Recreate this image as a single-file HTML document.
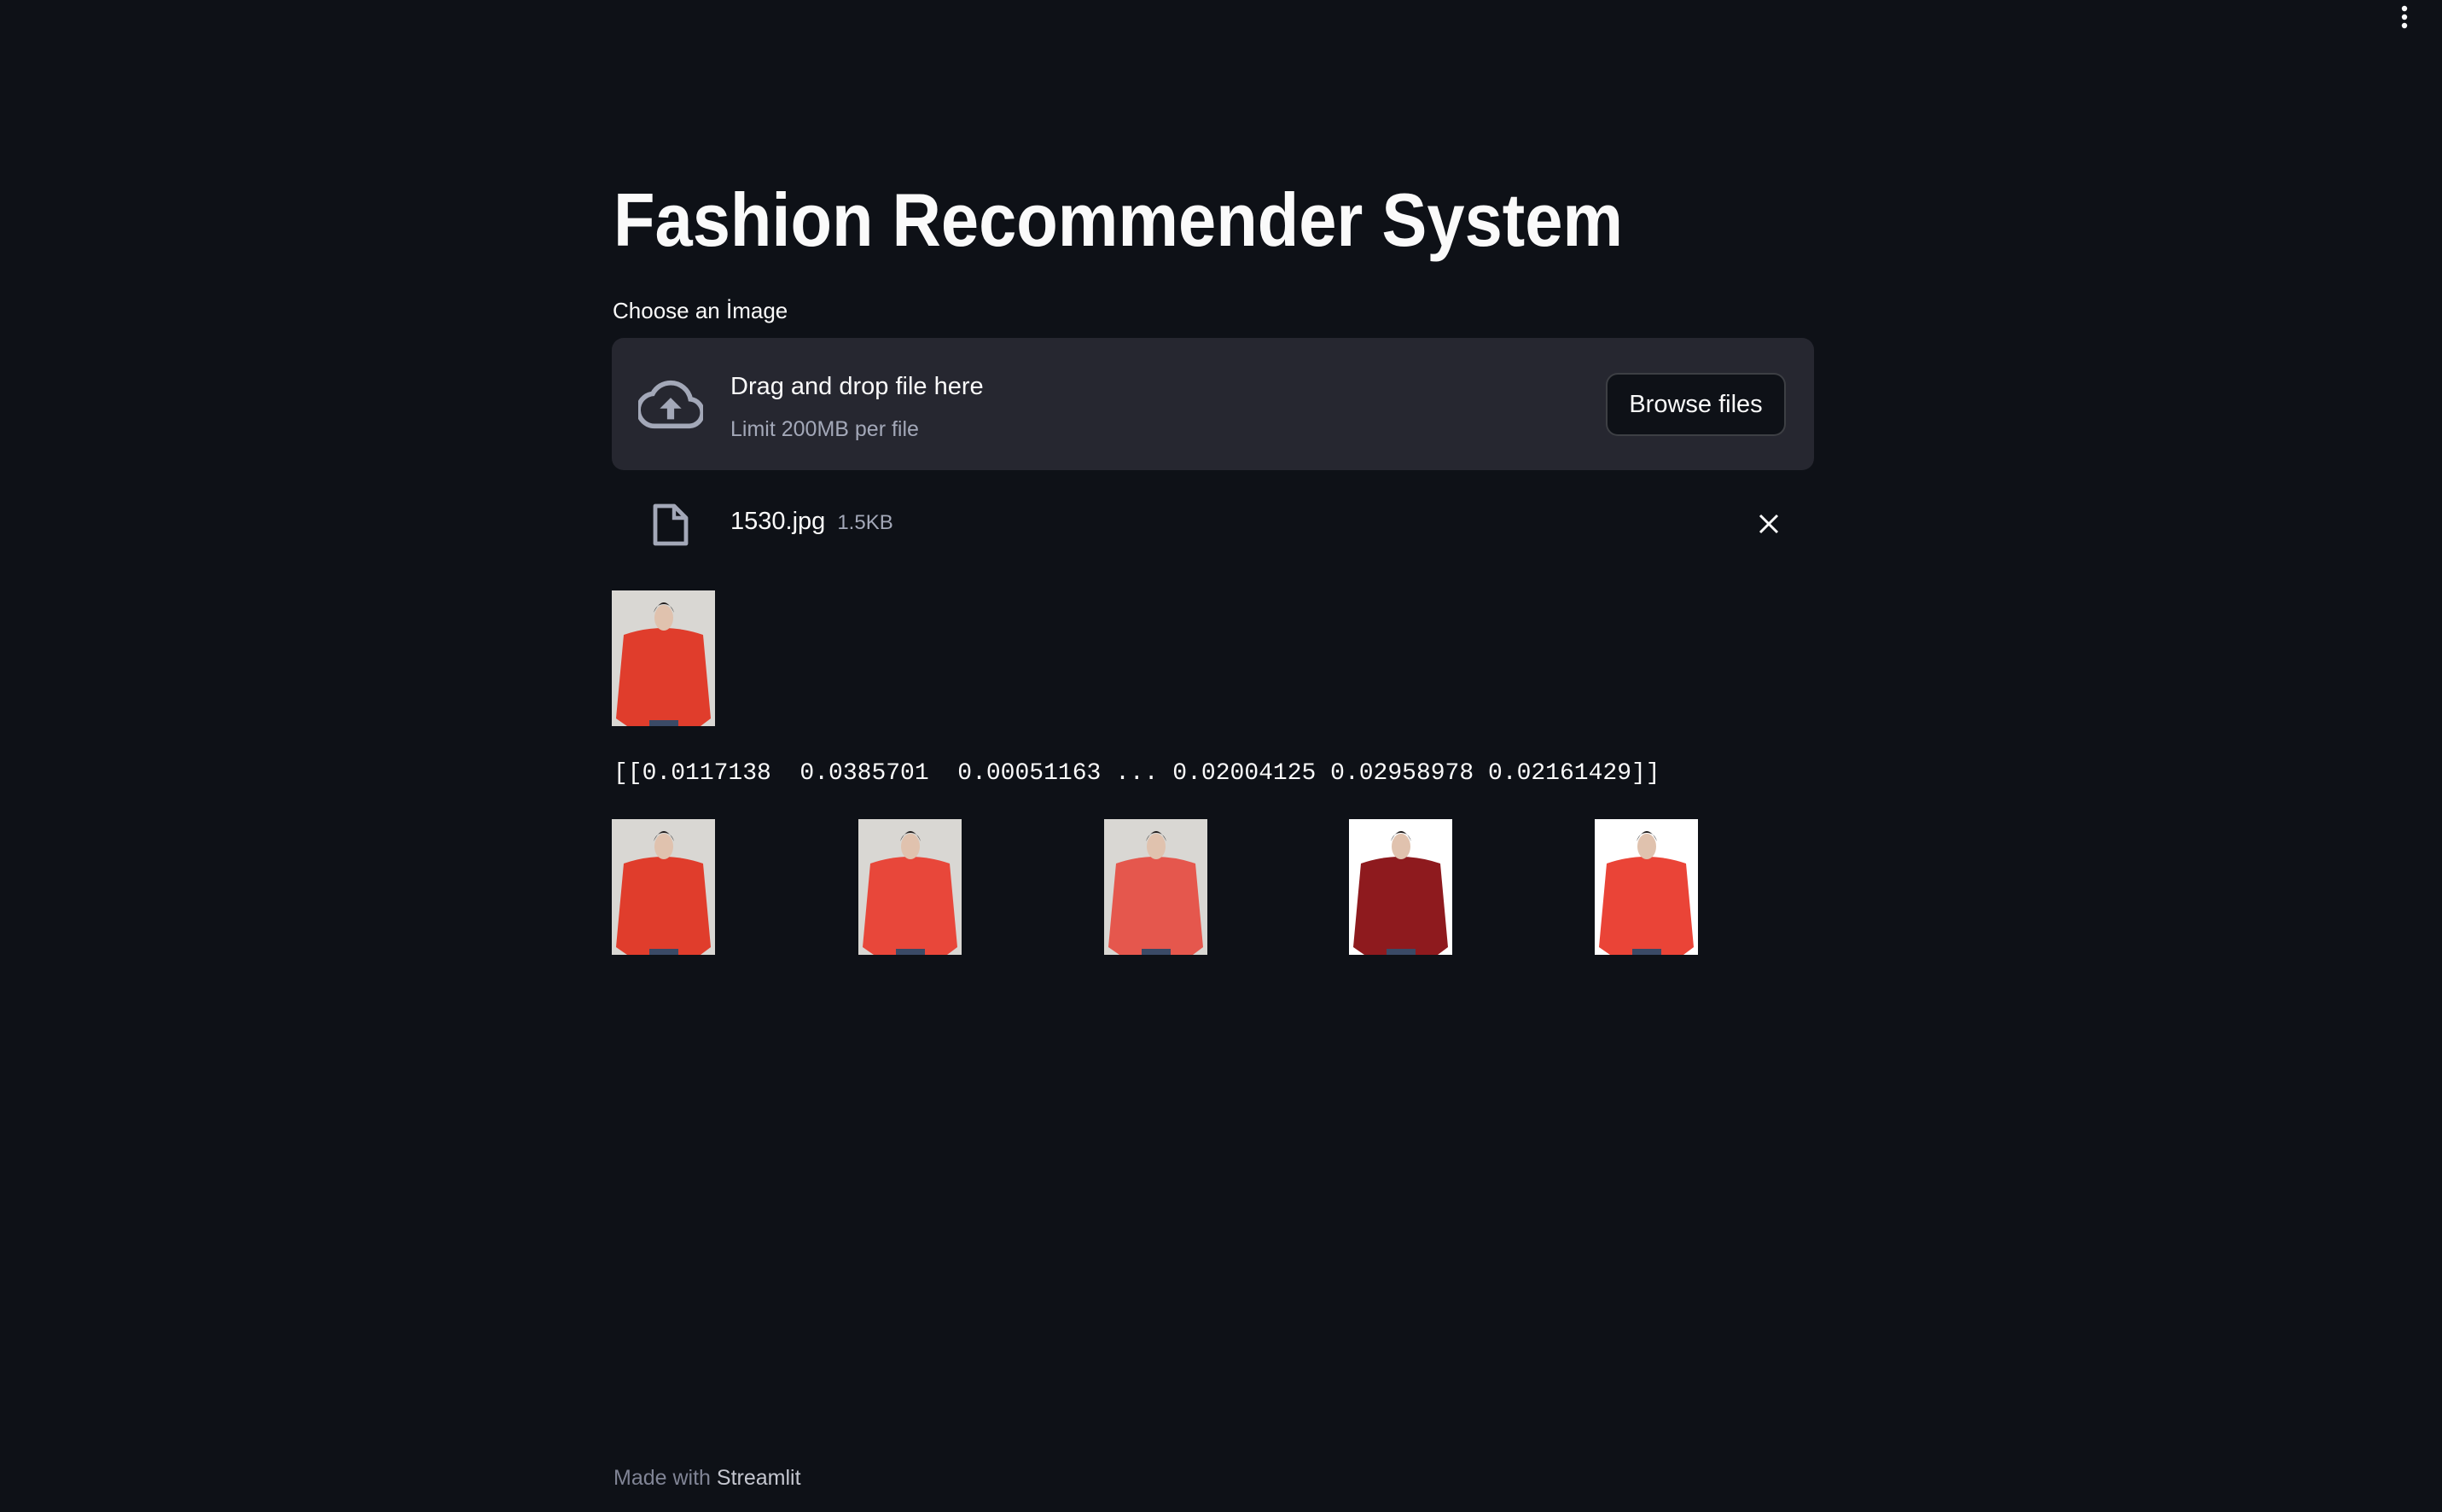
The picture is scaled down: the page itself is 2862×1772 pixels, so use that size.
<!DOCTYPE html>
<html><head><meta charset="utf-8">
<style>
html,body{margin:0;padding:0;}
body{width:2862px;height:1772px;background:#0e1117;position:relative;overflow:hidden;font-family:"Liberation Sans","DejaVu Sans",sans-serif;color:#fafafa;}
.a{position:absolute;white-space:nowrap;}
.box{position:absolute;left:717px;top:396px;width:1409px;height:155px;background:#262730;border-radius:14px;}
.btn{position:absolute;left:1882px;top:437px;width:211px;height:74px;border:2px solid rgba(250,250,250,0.2);border-radius:14px;background:#0e1117;box-sizing:border-box;font-size:29px;display:flex;align-items:center;justify-content:center;}
.img{position:absolute;width:121px;height:159px;}
</style></head><body>

<svg class="a" style="left:2806px;top:4px" width="24" height="32" viewBox="0 0 24 32"><circle cx="12" cy="6" r="3.2" fill="#fafafa"/><circle cx="12" cy="16" r="3.2" fill="#fafafa"/><circle cx="12" cy="26" r="3.2" fill="#fafafa"/></svg>

<svg class="a" style="left:715px;top:200px" width="1200" height="110"><text x="4" y="88" font-family="Liberation Sans, sans-serif" font-weight="bold" font-size="88" fill="#fafafa" textLength="1183" lengthAdjust="spacingAndGlyphs">Fashion Recommender System</text></svg>

<div class="a" style="left:718px;top:349px;font-size:26px;">Choose an İmage</div>

<div class="box"></div>
<svg class="a" style="left:748px;top:442px" width="76" height="64" viewBox="0 0 24 20"><path d="M19.35 8.04A7.49 7.49 0 0 0 12 2 7.5 7.5 0 0 0 5.35 6.04 6 6 0 0 0 6 18h13a5 5 0 0 0 .35-9.96z" fill="none" stroke="#a3a8b8" stroke-width="1.8"/><path d="M12 7.5l-4 4h2.7v4h2.6v-4H16z" fill="#a3a8b8"/></svg>
<div class="a" style="left:856px;top:437px;font-size:29px;">Drag and drop file here</div>
<div class="a" style="left:856px;top:489px;font-size:25px;color:#a3a8b8;">Limit 200MB per file</div>
<div class="btn">Browse files</div>

<svg class="a" style="left:764px;top:589px" width="44" height="52" viewBox="0 0 22 26"><path d="M2 2h11l7 7v15H2z" fill="none" stroke="#a3a8b8" stroke-width="2.4" stroke-linejoin="round"/><path d="M13 2v7h7" fill="none" stroke="#a3a8b8" stroke-width="2.2"/></svg>
<div class="a" style="left:856px;top:595px;font-size:29px;">1530.jpg <span style="font-size:24px;color:#a3a8b8;margin-left:6px;">1.5KB</span></div>
<svg class="a" style="left:2060px;top:601px" width="26" height="26" viewBox="0 0 26 26"><path d="M3 3L23 23M23 3L3 23" stroke="#fafafa" stroke-width="3"/></svg>

<svg width="0" height="0" style="position:absolute">
<defs>
<symbol id="man" viewBox="0 0 121 159">
<rect width="121" height="159" fill="var(--bg)"/>
<path d="M14 52 Q60 36 107 52 L116 150 L104 159 L18 159 L5 150Z" fill="var(--sh)"/>
<rect x="44" y="152" width="34" height="7" fill="#3a4a66"/>
<ellipse cx="61" cy="32" rx="11" ry="15" fill="#e0c2ae"/>
<path d="M49 26 Q61 2 73 26 Q70 16 61 16 Q52 16 49 26Z" fill="#1e1a1a"/>
</symbol>
</defs></svg>

<svg class="img" style="left:717px;top:692px;--bg:#d9d7d3;--sh:#e03d2c"><use href="#man"/></svg>

<div class="a" style="left:719px;top:891px;font-family:'Liberation Mono','DejaVu Sans Mono',monospace;font-size:28px;white-space:pre;">[[0.0117138  0.0385701  0.00051163 ... 0.02004125 0.02958978 0.02161429]]</div>

<svg class="img" style="left:717px;top:960px;--bg:#d9d7d3;--sh:#e03d2c"><use href="#man"/></svg>
<svg class="img" style="left:1006px;top:960px;--bg:#d9d7d3;--sh:#e8473a"><use href="#man"/></svg>
<svg class="img" style="left:1294px;top:960px;--bg:#d9d7d3;--sh:#e5574d"><use href="#man"/></svg>
<svg class="img" style="left:1581px;top:960px;--bg:#ffffff;--sh:#8e1a1e"><use href="#man"/></svg>
<svg class="img" style="left:1869px;top:960px;--bg:#ffffff;--sh:#ea4437"><use href="#man"/></svg>

<div class="a" style="left:719px;top:1718px;font-size:25px;color:#808495;">Made with <span style="color:#c4c6cf;">Streamlit</span></div>
</body></html>
